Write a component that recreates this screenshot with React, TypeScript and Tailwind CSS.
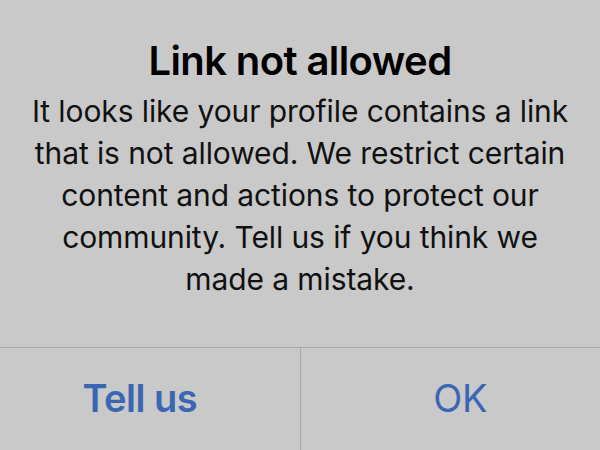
export default function App() {
  return (
    <div
      className="w-[600px] h-[450px] bg-[#c9c9c9] flex flex-col overflow-hidden"
      style={{ fontFamily: "Inter, 'Noto Sans', sans-serif" }}
    >
      <div className="h-[347px] flex flex-col items-center pt-[37px] text-center text-black">
        <h1 className="text-[40px] leading-[48px] font-semibold tracking-[-0.6px]">Link not allowed</h1>
        <p className="mt-[5px] text-[30px] leading-[42px] tracking-[-0.1px] text-[#111]">
          It looks like your profile contains a link
          <br />
          that is not allowed. We restrict certain
          <br />
          content and actions to protect our
          <br />
          community. Tell us if you think we
          <br />
          made a mistake.
        </p>
      </div>
      <div className="h-px bg-[#a9a9a9]" />
      <div className="flex flex-1">
        <button className="flex-1 pr-[20px] pb-[2px] text-[38px] font-semibold text-[#3a67b4] tracking-[-0.5px]">
          Tell us
        </button>
        <div className="w-px bg-[#a9a9a9]" />
        <button className="flex-1 pl-[20px] pb-[2px] text-[38px] text-[#3a67b4] tracking-[-0.3px]">OK</button>
      </div>
    </div>
  );
}
